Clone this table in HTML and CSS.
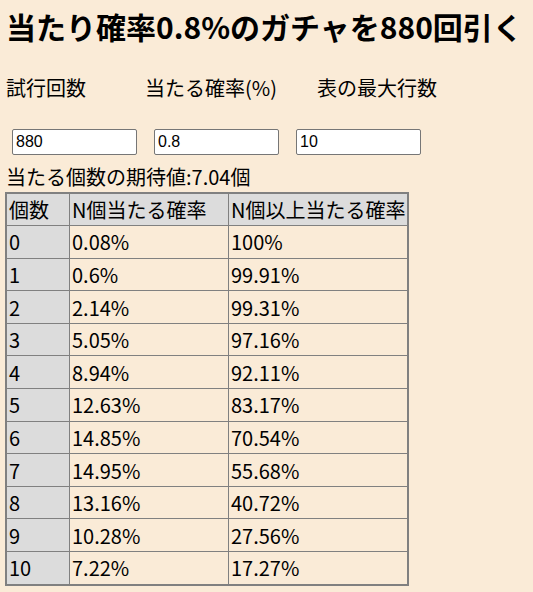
FILE: index.html
```html
<!DOCTYPE html>
<html lang="ja">
<head>
<meta charset="utf-8">
<link rel="stylesheet" href="styles.css">
</head>
<body>
<h1 class="title">当たり確率0.8%のガチャを880回引く</h1>
<div class="labels">
  <span class="lbl lbl-1">試行回数</span>
  <span class="lbl lbl-2">当たる確率(%)</span>
  <span class="lbl lbl-3">表の最大行数</span>
</div>
<div class="inputs">
  <input class="field" type="text" value="880">
  <input class="field" type="text" value="0.8">
  <input class="field" type="text" value="10">
</div>
<div class="expected">当たる個数の期待値:7.04個</div>
<table class="result">
  <thead>
    <tr><th class="c1">個数</th><th class="c2">N個当たる確率</th><th class="c3">N個以上当たる確率</th></tr>
  </thead>
  <tbody>
    <tr><td class="n">0</td><td>0.08%</td><td>100%</td></tr>
    <tr><td class="n">1</td><td>0.6%</td><td>99.91%</td></tr>
    <tr><td class="n">2</td><td>2.14%</td><td>99.31%</td></tr>
    <tr><td class="n">3</td><td>5.05%</td><td>97.16%</td></tr>
    <tr><td class="n">4</td><td>8.94%</td><td>92.11%</td></tr>
    <tr><td class="n">5</td><td>12.63%</td><td>83.17%</td></tr>
    <tr><td class="n">6</td><td>14.85%</td><td>70.54%</td></tr>
    <tr><td class="n">7</td><td>14.95%</td><td>55.68%</td></tr>
    <tr><td class="n">8</td><td>13.16%</td><td>40.72%</td></tr>
    <tr><td class="n">9</td><td>10.28%</td><td>27.56%</td></tr>
    <tr><td class="n">10</td><td>7.22%</td><td>17.27%</td></tr>
  </tbody>
</table>
</body>
</html>
```
FILE: styles.css
```css
html, body {
  background: #faebd7;
}
body {
  margin: 0;
  padding: 0 6px;
  font-family: "Noto Sans CJK JP", "Noto Sans", sans-serif;
  font-size: 20px;
  color: #000;
}
.title {
  margin: 6px 0 0;
  font-size: 30px;
  font-weight: bold;
  line-height: 40px;
  white-space: nowrap;
}
.labels {
  display: flex;
  margin-top: 27px;
  line-height: 29px;
}
.lbl-1 { width: 139px; }
.lbl-2 { width: 172px; }
.inputs {
  display: flex;
  gap: 17px;
  margin: 26.5px 0 0 6px;
}
.field {
  box-sizing: border-box;
  width: 125px;
  height: 26px;
  margin: 0;
  padding: 2px 3px;
  border: 1px solid #767676;
  border-radius: 2px;
  background: #fff;
  font-family: "Liberation Sans", Arial, sans-serif;
  font-size: 16px;
  color: #000;
}
.expected {
  margin-top: 7px;
  line-height: 29px;
}
.result {
  border-collapse: collapse;
  border: 2px solid #808080;
  margin-top: 1px;
  margin-left: -1px;
}
.result th, .result td {
  border: 1px solid #808080;
  padding: 1.3px 2px;
  line-height: 29px;
  font-weight: normal;
  text-align: left;
  white-space: nowrap;
}
.result th {
  background: #dcdcdc;
}
.result td.n {
  background: #dcdcdc;
}
.c1 { width: 58px; }
.c2 { width: 154px; }
```
